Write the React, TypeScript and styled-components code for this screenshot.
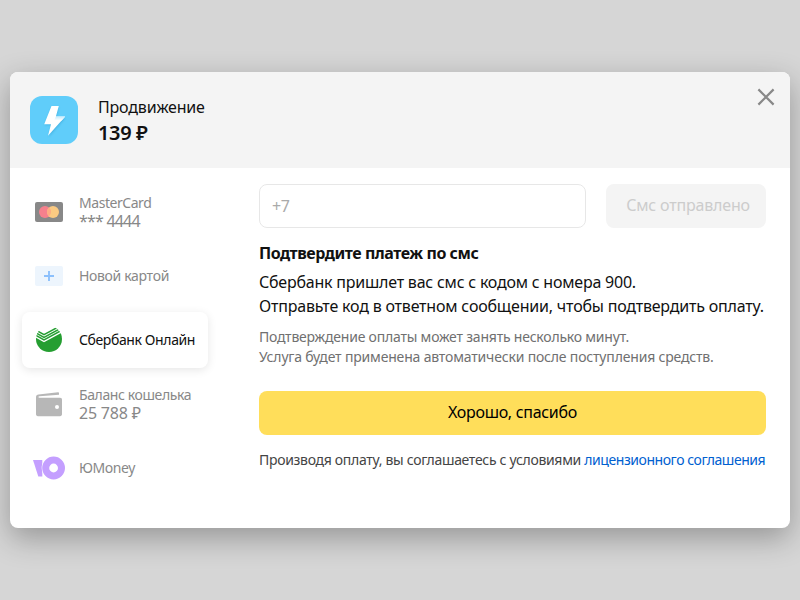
import React from "react";
import styled, { createGlobalStyle } from "styled-components";

const GlobalStyle = createGlobalStyle`
  * { box-sizing: border-box; }
  html, body { margin: 0; padding: 0; }
  body {
    background: #d6d6d6;
    font-family: "Noto Sans", "Open Sans", sans-serif;
    color: #111;
    overflow: hidden;
  }
`;

const Page = styled.div`
  width: 800px;
  height: 600px;
  display: flex;
  align-items: center;
  justify-content: center;
  background: #d6d6d6;
`;

const Dialog = styled.section`
  width: 780px;
  height: 456px;
  border-radius: 8px;
  background: #fff;
  overflow: hidden;
  box-shadow: 0 10px 30px rgba(0, 0, 0, 0.3);
`;

const Header = styled.header`
  height: 96px;
  display: flex;
  align-items: flex-start;
  padding: 15px 14px 0 20px;
  background: #f4f4f4;
`;

const AppIcon = styled.div`
  width: 48px;
  height: 48px;
  margin: 9px 20px 0 0;
  border-radius: 12px;
  background: #60cdfa;
`;

const Summary = styled.div`
  flex: 1;
  padding-top: 8px;
`;

const Text = styled.div<{
  $size?: number;
  $line?: number;
  $weight?: number;
  $color?: string;
  $track?: number;
}>`
  font-size: ${(p) => p.$size ?? 14}px;
  line-height: ${(p) => p.$line ?? 20}px;
  font-weight: ${(p) => p.$weight ?? 400};
  color: ${(p) => p.$color ?? "#111"};
  letter-spacing: ${(p) => p.$track ?? 0}px;
  white-space: pre;
`;

const CloseButton = styled.button`
  width: 20px;
  height: 20px;
  padding: 0;
  border: 0;
  background: none;
  svg { display: block; }
`;

const Body = styled.div`
  display: flex;
  height: 360px;
`;

const Methods = styled.nav`
  width: 249px;
  padding: 16px 0 0 12px;
  display: flex;
  flex-direction: column;
  gap: 8px;
`;

const Method = styled.div<{ $active?: boolean }>`
  width: 186px;
  height: 56px;
  border-radius: 8px;
  display: flex;
  align-items: center;
  box-shadow: ${(p) => (p.$active ? "0 2px 10px rgba(0, 0, 0, 0.1)" : "none")};
`;

const MethodIcon = styled.div`
  width: 34px;
  margin: 0 13px 0 10px;
  svg { display: block; }
`;

const Content = styled.main`
  width: 507px;
  padding-top: 16px;
`;

const PhoneRow = styled.div`
  display: flex;
  gap: 20px;
  margin-bottom: 13px;
`;

const PhoneField = styled.div`
  width: 327px;
  height: 44px;
  padding: 0 12px;
  display: flex;
  align-items: center;
  border: 1px solid #e7e7e7;
  border-radius: 8px;
`;

const Button = styled.button<{ $primary?: boolean }>`
  display: flex;
  align-items: center;
  justify-content: center;
  width: ${(p) => (p.$primary ? "507px" : "160px")};
  height: 44px;
  padding: ${(p) => (p.$primary ? "0 0 2px" : "0 0 2px 4px")};
  border: 0;
  border-radius: 8px;
  font-family: inherit;
  background: ${(p) => (p.$primary ? "#ffde5a" : "#f4f4f4")};
`;

const Message = styled.div`
  margin: 5px 0 9px;
`;

const Note = styled.div`
  margin-bottom: 24px;
`;

const Terms = styled.div`
  margin-top: 15px;
  display: flex;
  white-space: pre;
`;

const Link = styled.a`
  color: #0060d0;
  text-decoration: none;
`;

const Bolt = () => (
  <svg width="48" height="48" viewBox="0 0 48 48">
    <defs>
      <linearGradient id="fold" x1="0" y1="0" x2="0" y2="1">
        <stop offset="0" stopColor="#c8ecfc" />
        <stop offset="1" stopColor="#fff" />
      </linearGradient>
      <filter id="soft"><feGaussianBlur stdDeviation="0.8" /></filter>
    </defs>
    <path d="M21.700 11.500h7L26 22h9.300L18.700 41l2.700-12h-6.800z" fill="#2390c4" opacity=".4" filter="url(#soft)" />
    <path d="M21.500 10h7.300l-2.900 10.600h9.300L18 39.800 21 28.200h-6.800z" fill="#fff" />
    <path d="M25.900 20.600h9.300l-3.500 4-7.500-.4z" fill="url(#fold)" />
  </svg>
);

const CardIcon = () => (
  <svg width="34" height="20" viewBox="0 0 34 20">
    <rect x="3" width="28" height="20" rx="2" fill="#888" />
    <circle cx="13" cy="10" r="6" fill="#f5808d" />
    <circle cx="21" cy="10" r="6" fill="#fbca82" />
    <path d="M17 5.530a6 6 0 0 1 0 8.940 6 6 0 0 1 0-8.940" fill="#fdac83" />
  </svg>
);

const NewCardIcon = () => (
  <svg width="34" height="20" viewBox="0 0 34 20">
    <rect x="3" width="28" height="20" rx="2" fill="#edf5fd" />
    <path d="M17 5v10M12 10h10" stroke="#8cc0fc" strokeWidth="1.900" />
  </svg>
);

const SberIcon = () => (
  <svg width="34" height="28" viewBox="0 0 34 28">
    <defs>
      <clipPath id="sber"><circle cx="17" cy="13" r="13" /></clipPath>
    </defs>
    <g clipPath="url(#sber)">
      <path d="M4 11.800l8 4.500L31 6V28H4z" fill="#259e31" />
      <path
        d="M4 9.400l8 4.500L31 3.600M4 6.800l8 4.500L31 1M4 4.200l8 4.500L31-1.600"
        fill="none" stroke="#259e31" strokeWidth="1.500"
      />
    </g>
  </svg>
);

const WalletIcon = () => (
  <svg width="34" height="26" viewBox="0 0 34 26">
    <path
      d="M4 6.200C4 4.400 5 3.800 6.500 3.500L26 1.200c.7-.1 1 .2 1 .8v1.700L7.500 5.200C6 5.400 6 6.700 7.500 6.700H28c1.500 0 2 .8 2 2V23c0 1.400-.7 2.200-2 2.200H6c-1.300 0-2-.8-2-2.200z"
      fill="#b7b7b7"
    />
    <circle cx="25" cy="16" r="2" fill="#fff" />
  </svg>
);

const YooIcon = () => (
  <svg width="34" height="24" viewBox="0 0 34 24">
    <path d="M1 4h9.300v16.500H6.300z" fill="#c49fff" />
    <circle cx="21.600" cy="12" r="11.900" fill="#fff" />
    <circle cx="21.600" cy="12" r="7.900" fill="none" stroke="#c49fff" strokeWidth="7" />
  </svg>
);

export default function App() {
  return (
    <>
      <GlobalStyle />
      <Page>
        <Dialog>
          <Header>
            <AppIcon><Bolt /></AppIcon>
            <Summary>
              <Text $size={16} $line={24} $track={-0.18}>Продвижение</Text>
              <Text $size={20} $line={28} $weight={600} $track={-0.35}>139 ₽</Text>
            </Summary>
            <CloseButton aria-label="Закрыть">
              <svg width="20" height="20" viewBox="0 0 20 20">
                <path d="M2.400 2.400l15.200 15.200M17.600 2.400L2.400 17.600" stroke="#888" strokeWidth="2.200" />
              </svg>
            </CloseButton>
          </Header>
          <Body>
            <Methods>
              <Method>
                <MethodIcon><CardIcon /></MethodIcon>
                <div>
                  <Text $size={14} $line={18} $color="#888" $track={-0.45}>MasterCard</Text>
                  <Text $size={16} $line={18} $color="#888" $track={-0.8}>*** 4444</Text>
                </div>
              </Method>
              <Method>
                <MethodIcon><NewCardIcon /></MethodIcon>
                <Text $color="#888" $track={-0.33}>Новой картой</Text>
              </Method>
              <Method $active>
                <MethodIcon><SberIcon /></MethodIcon>
                <Text $track={-0.39}>Сбербанк Онлайн</Text>
              </Method>
              <Method>
                <MethodIcon><WalletIcon /></MethodIcon>
                <div>
                  <Text $size={14} $line={18} $color="#888" $track={-0.39}>Баланс кошелька</Text>
                  <Text $size={16} $line={18} $color="#888" $track={-0.2}>25 788 ₽</Text>
                </div>
              </Method>
              <Method>
                <MethodIcon><YooIcon /></MethodIcon>
                <Text $color="#888" $track={-0.45}>ЮMoney</Text>
              </Method>
            </Methods>
            <Content>
              <PhoneRow>
                <PhoneField><Text $size={16} $color="#aaa" $track={-0.3}>+7</Text></PhoneField>
                <Button disabled><Text $size={16} $color="#ccc" $track={-0.18}>Смс отправлено</Text></Button>
              </PhoneRow>
              <Text $size={16} $line={24} $weight={700} $track={-0.45}>Подтвердите платеж по смс</Text>
              <Message>
                <Text $size={16} $line={24} $track={-0.22}>Сбербанк пришлет вас смс с кодом с номера 900.</Text>
                <Text $size={16} $line={24} $track={-0.195}>Отправьте код в ответном сообщении, чтобы подтвердить оплату.</Text>
              </Message>
              <Note>
                <Text $color="#707070" $track={-0.21}>Подтверждение оплаты может занять несколько минут.</Text>
                <Text $color="#707070" $track={-0.175}>Услуга будет применена автоматически после поступления средств.</Text>
              </Note>
              <Button $primary><Text $size={16} $color="#000" $track={-0.3}>Хорошо, спасибо</Text></Button>
              <Terms>
                <Text $color="#444" $track={-0.31}>Производя оплату, вы соглашаетесь с условиями </Text>
                <Text $track={-0.44}><Link>лицензионного соглашения</Link></Text>
              </Terms>
            </Content>
          </Body>
        </Dialog>
      </Page>
    </>
  );
}
